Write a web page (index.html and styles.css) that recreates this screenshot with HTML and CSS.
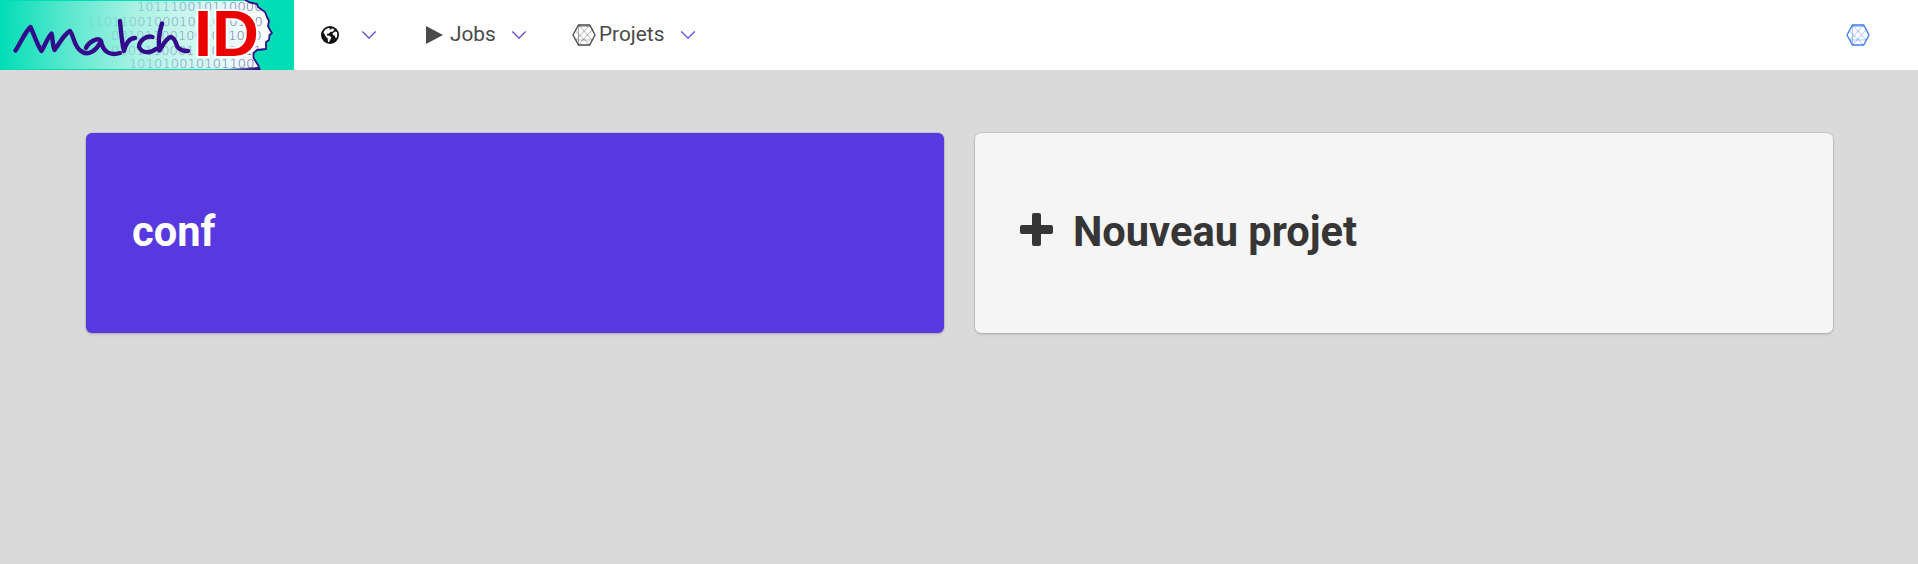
FILE: index.html
```html
<!DOCTYPE html>
<html lang="fr">
<head>
<meta charset="utf-8">
<title>matchID</title>
<link rel="stylesheet" href="styles.css">
</head>
<body>
<svg width="0" height="0" class="defs" aria-hidden="true">
  <symbol id="hex" viewBox="0 0 24 22">
    <path d="M6.5 1h11.2l5.3 10-5.3 10H6.5L1 11z" fill="none" stroke="currentColor" stroke-width="1.3"/>
    <path d="M6.500 1 20 16M17.700 1 4 16M6.500 21 20 6M17.700 21 3.500 7M3 16h18M6.500 2.500h12l3 4M6.500 1v20" fill="none" stroke="currentColor" stroke-width=".8" opacity=".55"/>
  </symbol>
  <symbol id="chevron" viewBox="0 0 14 8"><path d="M.3.5 7 7.2 13.7.5" fill="none" stroke="currentColor" stroke-width="1.15"/></symbol>
</svg>
<nav class="navbar">
  <a class="brand" href="#">
    <svg width="294" height="70" viewBox="0 0 294 70" role="img" aria-label="matchID">
      <defs>
        <linearGradient id="glow"><stop offset="0" stop-color="#00ddb5"/><stop offset=".18" stop-color="#43e5c8"/><stop offset=".5" stop-color="#a9f2e4"/><stop offset="1" stop-color="#fff"/></linearGradient>
        <linearGradient id="ink" gradientUnits="userSpaceOnUse" x1="85" y1="0" x2="265" y2="0"><stop offset="0" stop-color="#33118a" stop-opacity=".08"/><stop offset=".4" stop-color="#33118a" stop-opacity=".38"/><stop offset="1" stop-color="#33118a" stop-opacity=".8"/></linearGradient>
        <linearGradient id="neck"><stop offset="0" stop-color="#33118a" stop-opacity="0"/><stop offset="1" stop-color="#2b0a80"/></linearGradient>
        <clipPath id="head"><path d="M0 0H245L250 2.5 257 4 258 7 265 12 267 17 269 21 268 26 270 30 272 33 269.500 35 269 40 266 42V49L257 50 253.500 53V58L258 65 260 70H0z"/></clipPath>
      </defs>
      <rect width="294" height="70" fill="#00ddb5"/>
      <g clip-path="url(#head)">
        <rect y="1" width="272" height="68" fill="url(#glow)"/>
        <g class="bits" fill="url(#ink)">
          <text x="137" y="11">101110010110000</text>
          <text x="87" y="25.500">110110010001001010100</text>
          <text x="111" y="40">001011001001001000</text>
          <text x="111" y="54.500">010111000111010011</text>
          <text x="129" y="68">101010010101100</text>
        </g>
      </g>
      <path d="M245 0 250 2.500 257 4 258 7 265 12 267 17 269 21 268 26 270 30 272 33 269.500 35 269 40 266 42V49L257 50 253.500 53V58L258 65 260 70" fill="none" stroke="#33118a" stroke-width="1.8" stroke-linejoin="round"/>
      <path d="M205 70 259 67v3z" fill="url(#neck)"/>
      <path d="M15.500 50.500C20 44 25 32 30.500 27C34 34 37 45 41.500 51C45 45 48 37 51.500 33.500C53 38 52 44 54.500 50C60 43 63 35 70 31C74 36 74 47 81 51C88 57 97 50 101 41C98 36 88 43 86 48M101 41C103 52 110 56 120 53M120 21C121 32 122 44 124 51C126 43 129 38 135 38M152.500 37C146 35 139 41 139 47C142 54 151 53 156 49M162 23.500C159 33 158 42 159.500 50.500C163 45 166 38 171 37C177 39 175 46 179 48.500Q183 51.500 188 51" fill="none" stroke="#330a8c" stroke-width="4.4" stroke-linecap="round" stroke-linejoin="round"/>
      <text class="logo-id" x="194" y="56">ID</text>
    </svg>
  </a>
  <a class="item item-lang" href="#" aria-label="Langue">
    <svg class="globe" width="18" height="18" viewBox="0 0 18 18"><circle cx="9" cy="9" r="9" fill="#111"/><path d="M2.500 6.500 4 3.700 7 2l2 .3-.6 1.400 1.800-.4L11 2.200 13.500 3.500 12 5.500 9.400 6l-1.400 1.500L5.800 8l.4 1.400 2.300.4 2 1.700-1 1.800-1.500 2.900-1-.2-.3-3.500L4.500 10z" fill="#fff"/><path d="M14 5.500l2 .6.3 3.500-1 2.600-1-.6-.5-1.800-1.800-.7-.5-1.700z" fill="#fff"/></svg>
    <svg class="chev" width="14" height="8"><use href="#chevron"/></svg>
  </a>
  <a class="item item-jobs" href="#">
    <svg class="play" width="17" height="18" viewBox="0 0 17 18"><path d="M0 0 17 9 0 18z" fill="currentColor"/></svg>
    <span class="label jobs-label">Jobs</span>
    <svg class="chev" width="14" height="8"><use href="#chevron"/></svg>
  </a>
  <a class="item item-projects" href="#">
    <svg class="hex" width="24" height="22"><use href="#hex"/></svg>
    <span class="label projects-label">Projets</span>
    <svg class="chev" width="14" height="8"><use href="#chevron"/></svg>
  </a>
  <a class="item item-end" href="#" aria-label="Projet"><svg class="hex" width="24" height="22"><use href="#hex"/></svg></a>
</nav>
<main class="projects">
  <a class="card card-primary" href="#"><h1 class="title">conf</h1></a>
  <a class="card" href="#">
    <svg class="plus" width="33" height="33" viewBox="0 0 33 33"><path d="M14 0h5a2 2 0 0 1 2 2v10h10a2 2 0 0 1 2 2v5a2 2 0 0 1-2 2H21v10a2 2 0 0 1-2 2h-5a2 2 0 0 1-2-2V21H2a2 2 0 0 1-2-2v-5a2 2 0 0 1 2-2h10V2a2 2 0 0 1 2-2z" fill="currentColor"/></svg>
    <h1 class="title">Nouveau projet</h1>
  </a>
</main>
</body>
</html>
```
FILE: styles.css
```css
* { box-sizing: border-box; }
body { margin: 0; min-height: 564px; background: #dadada; font-family: Roboto, "Liberation Sans", sans-serif; color: #4a4a4a; }
a { color: inherit; text-decoration: none; }
svg { display: block; flex: none; }
.defs { position: absolute; }
.navbar { display: flex; height: 70px; background: #fff; }
.brand { width: 294px; }
.bits { font-family: "DejaVu Sans", sans-serif; font-weight: 200; font-size: 13px; letter-spacing: .1px; }
.logo-id { font: bold 65px "Liberation Sans", sans-serif; fill: #eb0000; stroke: #fff; stroke-width: 4px; paint-order: stroke; }
.item { display: flex; align-items: center; font-size: 20.8px; line-height: 30px; }
.item-lang { padding-left: 27px; width: 132px; }
.label { padding-bottom: 2px; }
.chev { color: #5839de; }
.item-lang .chev { margin-left: 23px; }
.item-jobs { width: 146px; }
.jobs-label { margin-left: 7px; width: 62px; }
.item-projects { width: 140px; }
.projects-label { margin-left: 3px; width: 82px; }
.play, .hex { margin-top: -1px; }
.item-end { margin-left: auto; padding-right: 48px; color: #3b7bef; }
.projects { display: grid; grid-template-columns: 1fr 1fr; gap: 31px; padding: 63px 85px 0 86px; }
.card { display: flex; align-items: center; height: 200px; padding: 0 45px; border-radius: 6px; background: #f5f5f5; color: #363636; box-shadow: 0 2px 3px rgba(10, 10, 10, .1), 0 0 0 1px rgba(10, 10, 10, .1); }
.card-primary { padding-left: 46px; background: #5739df; color: #fff; }
.title { margin: 0; padding-bottom: 2px; font-size: 41.6px; line-height: 48px; font-weight: 700; }
.plus { margin: -7px 20px 0 0; }
```
